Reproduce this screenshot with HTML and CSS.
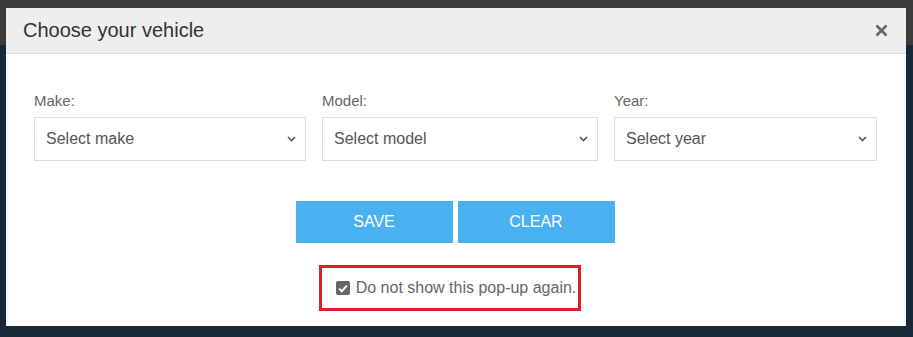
FILE: index.html
```html
<!DOCTYPE html>
<html lang="en">
<head>
  <meta charset="UTF-8" />
  <meta name="viewport" content="width=device-width, initial-scale=1.0"/>
  <title>Choose your vehicle</title>
  <link rel="stylesheet" href="styles.css">
</head>
<body>
  <div class="modal">
    <div class="modal-header">
      <h4>Choose your vehicle</h4>
      <span class="close">
        <svg width="13" height="13" viewBox="0 0 13 13"><path d="M1.5 1.5 L11.5 11.5 M11.5 1.5 L1.5 11.5" stroke="#666" stroke-width="2.6" fill="none"/></svg>
      </span>
    </div>

    <div class="modal-body">
      <div class="fields">
        <div class="field">
          <label>Make:</label>
          <div class="select">
            <span>Select make</span>
            <svg class="chev" width="9" height="6" viewBox="0 0 9 6"><path d="M1 1 L4.5 4.5 L8 1" stroke="#555" stroke-width="1.6" fill="none"/></svg>
          </div>
        </div>
        <div class="field">
          <label>Model:</label>
          <div class="select">
            <span>Select model</span>
            <svg class="chev" width="9" height="6" viewBox="0 0 9 6"><path d="M1 1 L4.5 4.5 L8 1" stroke="#555" stroke-width="1.6" fill="none"/></svg>
          </div>
        </div>
        <div class="field">
          <label>Year:</label>
          <div class="select">
            <span>Select year</span>
            <svg class="chev" width="9" height="6" viewBox="0 0 9 6"><path d="M1 1 L4.5 4.5 L8 1" stroke="#555" stroke-width="1.6" fill="none"/></svg>
          </div>
        </div>
      </div>

      <div class="buttons">
        <button class="btn">SAVE</button>
        <button class="btn">CLEAR</button>
      </div>

      <div class="again-row">
        <label class="again">
          <span class="check">
            <svg width="10" height="9" viewBox="0 0 10 9"><path d="M1.2 4.6 L3.8 7.2 L8.8 1.6" stroke="#fff" stroke-width="2" fill="none"/></svg>
          </span>
          Do not show this pop-up again.
        </label>
      </div>
    </div>
  </div>
</body>
</html>
```

FILE: styles.css
```css
body {
  margin: 0;
  font-family: 'Liberation Sans', Arial, sans-serif;
  background: linear-gradient(#3b3b3b 0, #3b3b3b 45px, #172a3a 45px);
  height: 337px;
  overflow: hidden;
}

.modal {
  margin: 8px 0 0 6px;
  width: 900px;
  height: 318px;
  background: #fff;
}

.modal-header {
  height: 45px;
  background: #eeeeee;
  border-bottom: 1px solid #dddddd;
  padding: 0 18px 0 17px;
  display: flex;
  align-items: center;
  justify-content: space-between;
}

.modal-header h4 {
  margin: 0;
  font-size: 20px;
  font-weight: normal;
  color: #333;
}

.close {
  display: flex;
}

.modal-body {
  padding: 38px 0 0 28px;
}

.fields {
  display: grid;
  grid-template-columns: 272px 276px 263px;
  column-gap: 16px;
}

.field label {
  display: block;
  font-size: 15px;
  color: #666;
  margin-bottom: 8px;
}

.select {
  height: 44px;
  box-sizing: border-box;
  border: 1px solid #dddddd;
  padding: 0 9px 0 11px;
  display: flex;
  align-items: center;
  justify-content: space-between;
  font-size: 16px;
  color: #555;
}

.buttons {
  display: flex;
  justify-content: center;
  gap: 5px;
  margin-top: 40px;
  padding-right: 30px;
}

.btn {
  width: 157px;
  height: 42px;
  border: none;
  background: #4ab1f1;
  color: #fff;
  font-family: inherit;
  font-size: 16px;
}

.again-row {
  display: flex;
  justify-content: center;
  margin-top: 22px;
  padding-right: 40px;
}

.again {
  display: flex;
  align-items: center;
  gap: 6px;
  height: 40px;
  border: 3px solid #e11d25;
  padding: 0 2px 0 14px;
  font-size: 16px;
  color: #666;
}

.check {
  width: 14px;
  height: 14px;
  border-radius: 2px;
  background: #666;
  display: flex;
  align-items: center;
  justify-content: center;
}
```
